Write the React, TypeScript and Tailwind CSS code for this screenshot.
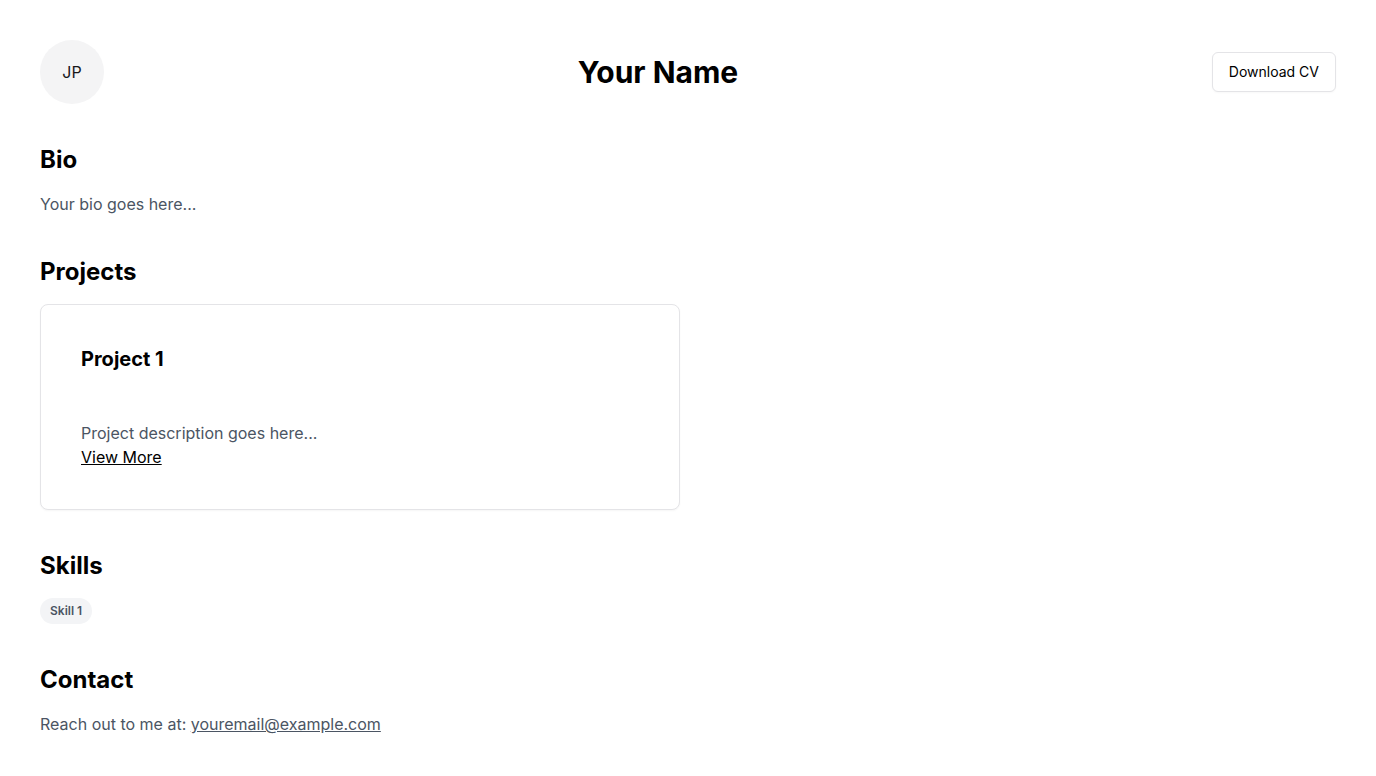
import { FC, ReactNode } from 'react';

const Section: FC<{ title: string; children: ReactNode }> = ({ title, children }) => (
  <section className="flex flex-col gap-4">
    <h2 className="text-2xl font-bold text-black">{title}</h2>
    {children}
  </section>
);

export default function App() {
  return (
    <div className="min-h-screen bg-white p-10 font-['Inter',sans-serif] text-black">
      <header className="flex items-center justify-between">
        <div className="flex h-16 w-16 items-center justify-center rounded-full bg-[#f4f4f5] text-base text-[#18181b]">
          JP
        </div>
        <h1 className="text-3xl font-bold">Your Name</h1>
        <button className="h-10 rounded-md border border-[#e4e4e7] bg-white px-4 text-sm font-normal text-black shadow-[0_1px_2px_rgba(0,0,0,0.03)]">
          Download CV
        </button>
      </header>

      <main className="mt-10 flex flex-col gap-10">
        <Section title="Bio">
          <p className="text-base text-[#4b5563]">Your bio goes here...</p>
        </Section>

        <Section title="Projects">
          <div className="grid grid-cols-2 gap-4">
            <div className="rounded-lg border border-[#e4e4e7] bg-white p-10 shadow-[0_1px_2px_rgba(0,0,0,0.04)]">
              <h3 className="text-xl font-bold">Project 1</h3>
              <p className="mt-12 text-base text-[#4b5563]">Project description goes here...</p>
              <a href="#" className="text-base text-black underline">
                View More
              </a>
            </div>
          </div>
        </Section>

        <Section title="Skills">
          <div className="flex gap-2">
            <span className="rounded-full bg-[#f3f4f6] px-2.5 py-[5px] text-xs font-semibold text-[#4b5563]">
              Skill 1
            </span>
          </div>
        </Section>

        <Section title="Contact">
          <p className="text-base text-[#4b5563]">
            Reach out to me at:{' '}
            <a href="#" className="underline">
              youremail@example.com
            </a>
          </p>
        </Section>
      </main>
    </div>
  );
}
